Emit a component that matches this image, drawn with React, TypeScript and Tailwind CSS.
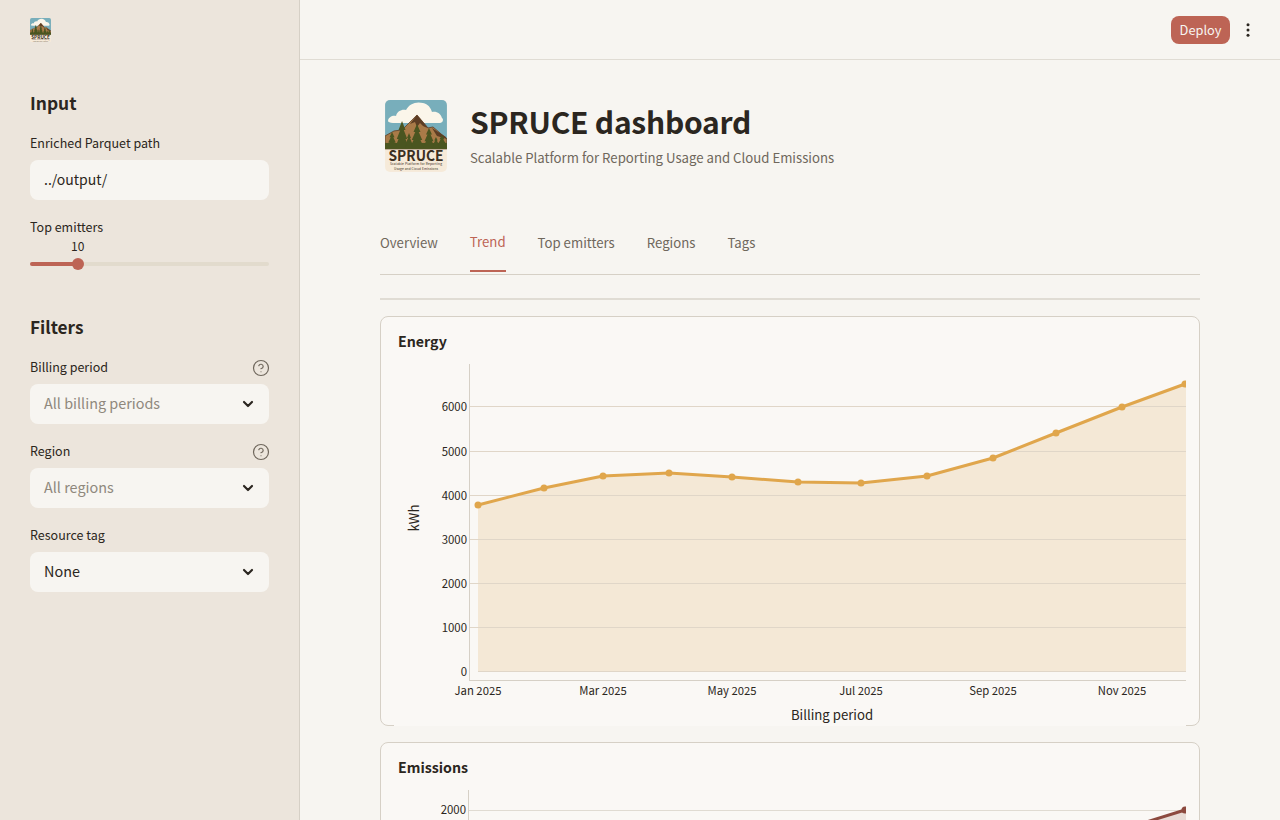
import React from 'react';
import { ChevronDown, CircleHelp } from 'lucide-react';

const font = '[font-family:"Noto_Sans_CJK_JP",sans-serif]';

const energyPoints = [
  [478, 505], [544, 488], [603, 476], [669, 473], [732, 477], [798, 482],
  [861, 483], [927, 476], [993, 458], [1056, 433], [1122, 407], [1185, 384],
];
const energyLine = energyPoints.map((p) => p.join(',')).join(' ');
const energyTicks = [
  { label: '6000', y: 406 }, { label: '5000', y: 451 }, { label: '4000', y: 495 },
  { label: '3000', y: 539 }, { label: '2000', y: 583 }, { label: '1000', y: 627 },
];
const monthTicks = [
  { label: 'Jan 2025', x: 478 }, { label: 'Mar 2025', x: 603 }, { label: 'May 2025', x: 732 },
  { label: 'Jul 2025', x: 861 }, { label: 'Sep 2025', x: 993 }, { label: 'Nov 2025', x: 1122 },
];

// three tier pine, w is half of the base width
const tree = (x: number, top: number, w: number) => {
  const h = 48 - top;
  const a = w * 0.5;
  const b = w * 0.25;
  const t = h / 3;
  return `M${x} ${top}l${a} ${t}h${-b}l${a} ${t}h${-b}l${a} ${t}H${x - w}l${a} ${-t}h${-b}l${a} ${-t}h${-b}z`;
};

const Logo = ({ size }: { size: number }) => (
  <svg width={size} height={size * 1.16} viewBox="0 0 62 72" className="block">
    <defs>
      <clipPath id={`logo-${size}`}>
        <rect width="62" height="72" rx="5" />
      </clipPath>
    </defs>
    <g clipPath={`url(#logo-${size})`}>
      <rect width="62" height="72" fill="#f6ead9" />
      <rect width="62" height="49" fill="#78aebb" />
      <path d="M3 21c0-4 5-6 8-5 1-5 6-7 10-6 3-6 10-9 17-7 5 1 8 5 9 9 5-1 9 2 10 6 2 1 1 5-2 5H8c-3 0-5-1-5-2z" fill="#fbf6ea" />
      <path d="M0 49V36l9-5 8-1 15-15 11 13 5-1 14 12v10z" fill="#a97a48" stroke="#5d3d24" strokeWidth="0.8" />
      <path d="M32 15l-7 9 5-2 2 5 3-4 3 3 2 1 3 1z M47 28l5 8 10 3-1-2z" fill="#5d3d24" />
      <rect y="43" width="62" height="6" fill="#4a5520" />
      <path d={tree(17, 21, 7)} fill="#4a5520" />
      <path d={tree(32, 24, 7)} fill="#4a5520" />
      <path d={tree(44, 28, 6)} fill="#4a5520" />
      <path d={tree(57, 35, 5)} fill="#4a5520" />
      <path d={tree(7, 32, 5)} fill="#4a5520" />
      <path d={tree(24, 33, 4)} fill="#4a5520" />
      <path d={tree(51, 37, 3.5)} fill="#4a5520" />
      <text x="31" y="61" textAnchor="middle" fontSize="15" fontWeight="700" fill="#3b2f22" fontFamily="'Noto Sans CJK JP', sans-serif" textLength="55" lengthAdjust="spacingAndGlyphs">SPRUCE</text>
      <text x="31" y="65.5" textAnchor="middle" fontSize="3.2" fill="#3b2f22" fontFamily="'Noto Sans CJK JP', sans-serif" textLength="52">Scalable Platform for Reporting</text>
      <text x="31" y="70" textAnchor="middle" fontSize="3.2" fill="#3b2f22" fontFamily="'Noto Sans CJK JP', sans-serif" textLength="44">Usage and Cloud Emissions</text>
    </g>
  </svg>
);

const FilterSelect = ({ label, value, muted, help }: { label: string; value: string; muted?: boolean; help?: boolean }) => (
  <div className="mb-[15px]">
    <div className="flex items-center justify-between h-[24px] mb-[5px] text-[12.5px] text-[#2b2620]">
      <span>{label}</span>
      {help && <CircleHelp size={18} strokeWidth={1.6} className="text-[#6f675c] -mr-[1px] mt-[1px]" />}
    </div>
    <div className="flex items-center justify-between h-[40px] pl-[14px] pr-[13px] pb-[2px] rounded-[8px] bg-[#f7f5f1]">
      <span className={`text-[14.4px] ${muted ? 'text-[#8f887d]' : 'text-[#2b2620]'}`}>{value}</span>
      <ChevronDown size={16} strokeWidth={3.2} className="text-[#2b2620] mt-[2px]" />
    </div>
  </div>
);

const Sidebar = () => (
  <aside className="w-[300px] shrink-0 h-full bg-[#ece5dc] border-r border-[#d6d0c6] px-[30px] pt-[18px]">
    <div className="h-[24px]"><Logo size={21} /></div>
    <h2 className="mt-[45px] text-[17.4px] leading-[32px] font-semibold text-[#2b2620]">Input</h2>
    <div className="mt-[12px] text-[12.5px] leading-[24px] text-[#2b2620]">Enriched Parquet path</div>
    <div className="mt-[5px] h-[40px] flex items-center px-[14px] pb-[2px] rounded-[8px] bg-[#f7f5f1] text-[14px] text-[#2b2620]">../output/</div>
    <div className="mt-[15px] text-[12.5px] leading-[24px] text-[#2b2620]">Top emitters</div>
    <div className="relative h-[22px]">
      <span className="absolute left-[41px] top-[-3px] text-[12px] leading-[20px] text-[#2b2620]">10</span>
      <div className="absolute left-0 right-0 top-[23px] h-[4px] rounded-full bg-[#e2dbcd]" />
      <div className="absolute left-0 w-[48px] top-[23px] h-[4px] rounded-full bg-[#bd6455]" />
      <div className="absolute left-[42px] top-[19px] w-[12px] h-[12px] rounded-full bg-[#bd6455]" />
    </div>
    <h2 className="mt-[50px] mb-[12px] text-[17.2px] leading-[32px] font-semibold text-[#2b2620]">Filters</h2>
    <FilterSelect label="Billing period" value="All billing periods" muted help />
    <FilterSelect label="Region" value="All regions" muted help />
    <FilterSelect label="Resource tag" value="None" />
  </aside>
);

const tabs = ['Overview', 'Trend', 'Top emitters', 'Regions', 'Tags'];

const Tabs = () => (
  <div className="mt-[43px] flex gap-[32px] h-[60px] border-b border-[#d6d0c6]">
    {tabs.map((t) =>
      t === 'Trend' ? (
        <div key={t} className="h-[57px] pt-[15px] text-[13.2px] leading-[24px] text-[#bd6455] border-b-2 border-[#bd6455]">
          {t}
        </div>
      ) : (
        <div key={t} className="pt-[16px] text-[13.2px] leading-[24px] text-[#6f675c]">{t}</div>
      )
    )}
  </div>
);

const EnergyChart = () => (
  <svg width="792" height="366" viewBox="394 360 792 366" className="block bg-[#faf8f5] ml-[13px] -mb-px relative">
    <path d={`M478 671 L${energyLine.replace(/ /g, ' L')} L1186 384 L1186 671 Z`} fill="#f4e8d6" />
    {energyTicks.map((t) => (
      <line key={t.y} x1="470" x2="1186" y1={t.y + 0.5} y2={t.y + 0.5} stroke="#e0d6c8" />
    ))}
    <line x1="478" x2="1186" y1="671.5" y2="671.5" stroke="#e0d6c8" />
    <line x1="469.5" x2="469.5" y1="364" y2="681" stroke="#d6d0c6" />
    <line x1="469" x2="1186" y1="680.5" y2="680.5" stroke="#d6d0c6" />
    {energyTicks.map((t) => (
      <text key={t.label} x="467" y={t.y + 5} textAnchor="end" fontSize="11.4" fill="#2b2620">{t.label}</text>
    ))}
    <text x="467" y="676" textAnchor="end" fontSize="11.4" fill="#2b2620">0</text>
    {monthTicks.map((t) => (
      <text key={t.label} x={t.x} y="695" textAnchor="middle" fontSize="11.3" fill="#2b2620">{t.label}</text>
    ))}
    <text x="832" y="720" textAnchor="middle" fontSize="13.2" fill="#2b2620">Billing period</text>
    <text transform="translate(419 518) rotate(-90)" textAnchor="middle" fontSize="13.2" fill="#2b2620">kWh</text>
    <polyline points={energyLine} fill="none" stroke="#e0a64c" strokeWidth="3" strokeLinejoin="round" />
    {energyPoints.map(([x, y]) => (
      <circle key={x} cx={x} cy={y} r="3.5" fill="#e0a64c" />
    ))}
  </svg>
);

const EmissionsChart = () => (
  <svg width="792" height="40" viewBox="394 780 792 40" className="block ml-[13px]">
    <path d="M1140 824 L1185 810 L1186 810 L1186 824 Z" fill="#e8dcd6" />
    <line x1="469" x2="1186" y1="810.5" y2="810.5" stroke="#e0dbd2" />
    <line x1="468.5" x2="468.5" y1="790" y2="820" stroke="#d6d0c6" />
    <text x="466" y="814" textAnchor="end" fontSize="11.4" fill="#2b2620">2000</text>
    <line x1="1140" y1="824" x2="1185" y2="810" stroke="#8c4a3f" strokeWidth="3" />
    <circle cx="1185" cy="810" r="3.5" fill="#8c4a3f" />
  </svg>
);

export default function App() {
  return (
    <div className={`flex h-[820px] overflow-hidden bg-[#f7f5f1] ${font}`}>
      <Sidebar />
      <div className="flex-1 min-w-0 flex flex-col">
        <header className="h-[60px] shrink-0 border-b border-[#e0dcd4] flex items-center justify-end pr-[24px] gap-[10px]">
          <button className="w-[59px] h-[28px] rounded-[8px] bg-[#bd6455] text-[12.8px] text-[#f7f5f1]">Deploy</button>
          <svg width="16" height="16" viewBox="0 0 16 16" fill="#2b2620">
            <circle cx="8" cy="2.8" r="1.5" /><circle cx="8" cy="8" r="1.5" /><circle cx="8" cy="13.2" r="1.5" />
          </svg>
        </header>
        <main className="flex-1 min-h-0 px-[80px] pt-[40px]">
          <div className="flex items-start gap-[23px]">
            <div className="pl-[5px]"><Logo size={62} /></div>
            <div className="pt-[1px]">
              <h1 className="text-[30px] leading-[40px] font-bold text-[#2b2620] tracking-[-0.25px]">SPRUCE dashboard</h1>
              <p className="mt-[5px] text-[13.2px] leading-[24px] text-[#6f675c]">Scalable Platform for Reporting Usage and Cloud Emissions</p>
            </div>
          </div>
          <Tabs />
          <div className="mt-[23px] h-[2px] bg-[#e0dcd4]" />
          <section className="mt-[16px] h-[410px] rounded-[8px] border border-[#d6d0c6] bg-[#faf8f5]">
            <h3 className="pl-[17px] pt-[12px] h-[43px] text-[14.2px] leading-[24px] font-semibold text-[#2b2620]">Energy</h3>
            <EnergyChart />
          </section>
          <section className="mt-[16px] h-[200px] rounded-[8px] border border-[#d6d0c6] bg-[#faf8f5]">
            <h3 className="pl-[17px] pt-[12px] h-[37px] text-[14.2px] leading-[24px] font-semibold text-[#2b2620]">Emissions</h3>
            <EmissionsChart />
          </section>
        </main>
      </div>
    </div>
  );
}
